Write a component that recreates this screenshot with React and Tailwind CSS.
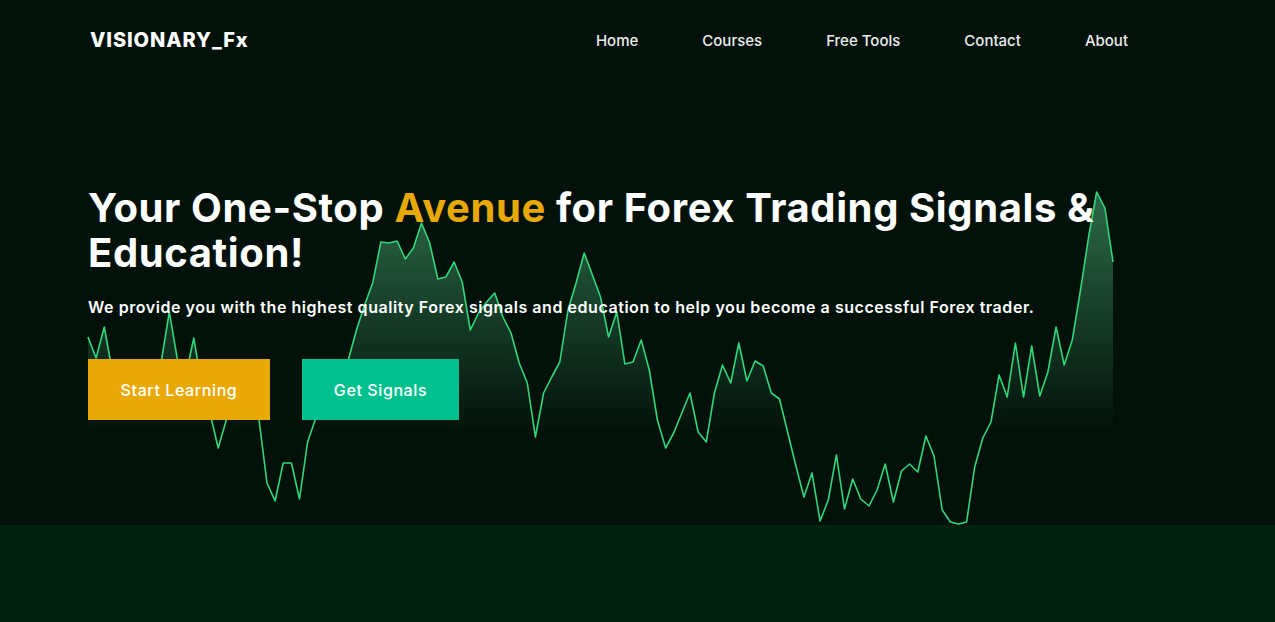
const NAV_LINKS = ["Home", "Courses", "Free Tools", "Contact", "About"];

// closing prices traced from the hero chart, one every ~8px
const PRICES = [
  337, 358, 327, 372, 385, 378, 390, 375, 385, 362, 312, 360, 376, 338, 387, 413, 448, 420, 400, 385,
  405, 418, 483, 501, 463, 463, 499, 442, 418, 400, 395, 375, 360, 330, 305, 283, 242, 243, 241, 259,
  248, 223, 243, 279, 277, 262, 282, 330, 313, 302, 293, 317, 333, 363, 383, 437, 393, 377, 362, 310,
  283, 253, 275, 297, 337, 312, 364, 362, 340, 370, 420, 448, 433, 413, 393, 432, 442, 393, 365, 383,
  343, 381, 361, 366, 393, 399, 432, 465, 497, 473, 521, 500, 455, 509, 479, 499, 506, 490, 464, 502,
  471, 464, 472, 436, 456, 510, 522, 524, 522, 467, 438, 422, 375, 397, 343, 397, 346, 396, 372, 327,
  365, 340, 290, 237, 192, 208, 262,
];

const X0 = 88;
const X1 = 1113;
const FILL_BOTTOM = 432;

function HeroChart() {
  const step = (X1 - X0) / (PRICES.length - 1);
  const pts = PRICES.map((y, i) => [X0 + i * step, y]);
  const line = pts.map(([x, y], i) => `${i ? "L" : "M"}${x.toFixed(1)} ${y}`).join(" ");
  const area = `${line} L${X1} ${FILL_BOTTOM + 100} L${X0} ${FILL_BOTTOM + 100} Z`;

  return (
    <svg className="absolute inset-0 pointer-events-none" width="1275" height="525" viewBox="0 0 1275 525">
      <defs>
        <linearGradient id="areaFill" gradientUnits="userSpaceOnUse" x1="0" y1="190" x2="0" y2={FILL_BOTTOM}>
          <stop offset="0" stopColor="#4fb27a" stopOpacity="0.55" />
          <stop offset="1" stopColor="#4fb27a" stopOpacity="0" />
        </linearGradient>
        <clipPath id="areaClip">
          <rect x={X0} y="0" width={X1 - X0} height={FILL_BOTTOM} />
        </clipPath>
      </defs>
      <path d={area} fill="url(#areaFill)" clipPath="url(#areaClip)" />
      <path d={line} fill="none" stroke="#2fd67a" strokeWidth="1.6" strokeLinejoin="round" />
    </svg>
  );
}

export default function App() {
  return (
    <div className="min-h-screen bg-[#022210] font-['Inter',sans-serif]">
      <section className="relative h-[525px] overflow-hidden bg-[#02120a]">
        <HeroChart />

        <nav className="relative flex h-20 items-center justify-between pl-[90px] pr-[147px]">
          <span className="text-[20px] font-extrabold tracking-[0.9px] text-white">VISIONARY_Fx</span>
          <ul className="flex items-center gap-16">
            {NAV_LINKS.map((l) => (
              <li key={l}>
                <a href="#" className="text-[15px] font-medium text-[#ececec]">
                  {l}
                </a>
              </li>
            ))}
          </ul>
        </nav>

        <div className="relative px-[88px] pt-[105px]">
          <h1 className="text-[40px] font-bold leading-[45px] tracking-[0.6px] text-white">
            Your One-Stop <span className="text-[#e8a906]">Avenue</span> for Forex Trading Signals &amp;
            <br />
            Education!
          </h1>
          <p className="mt-5 text-[16px] font-semibold leading-6 tracking-[0.55px] text-white">
            We provide you with the highest quality Forex signals and education to help you become a successful
            Forex trader.
          </p>
          <div className="mt-[40px] flex gap-8">
            <a href="#" className="flex h-[61px] w-[182px] items-center justify-center bg-[#e8a906] text-[16px] font-medium tracking-[0.6px] text-white">
              Start Learning
            </a>
            <a href="#" className="flex h-[61px] w-[157px] items-center justify-center bg-[#00c18d] text-[16px] font-medium tracking-[0.6px] text-white">
              Get Signals
            </a>
          </div>
        </div>
      </section>
    </div>
  );
}
